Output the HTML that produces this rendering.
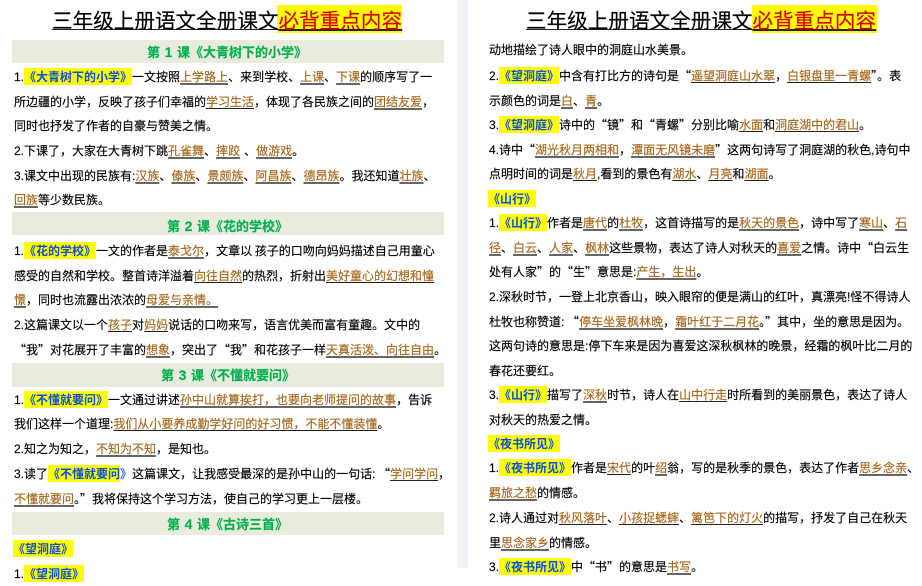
<!DOCTYPE html>
<html lang="zh-CN">
<head>
<meta charset="utf-8">
<style>
html,body{margin:0;padding:0;background:#fff;}
body{width:922px;height:568px;overflow:hidden;position:relative;font-family:"Noto Sans CJK SC","WenQuanYi Zen Hei",sans-serif;font-size:12px;color:#000;-webkit-text-stroke:0.15px currentColor;}
.strip{position:absolute;left:457px;top:0;width:11px;height:568px;background:linear-gradient(90deg,#f5f6f9,#eff0f6);}
.l{position:absolute;height:24px;line-height:24px;white-space:nowrap;}
.a{left:14px;}
.b{left:489px;}
.n{font-family:"Liberation Sans",sans-serif;}
.band{position:absolute;left:12px;width:432px;background:#e9ecdc;}
.h{position:absolute;height:24px;line-height:24px;white-space:nowrap;color:#00b050;font-weight:bold;font-size:13px;}
.h i{font-style:normal;display:inline-block;width:17px;text-align:center;font-family:"Liberation Sans",sans-serif;font-size:14px;}
.y{display:inline-block;background:#ff0;height:17px;line-height:17px;color:#0b50d8;font-weight:bold;-webkit-text-stroke:0;}
.bl{color:#0b50d8;}
.u,.g{color:#a5661a;text-decoration-line:underline;text-decoration-skip-ink:none;text-underline-offset:2px;}
.u{text-decoration-color:#222;text-decoration-thickness:1px;}
.g{text-decoration-color:#666;text-decoration-thickness:2px;}
.yt{position:absolute;top:5px;height:28px;background:#ff0;}
.t{position:absolute;top:5px;height:28px;line-height:28px;font-size:20.6px;white-space:nowrap;color:#000;text-decoration-line:underline;text-decoration-skip-ink:none;text-decoration-color:#222;text-decoration-thickness:1px;text-underline-offset:1px;}
.t b{font-weight:normal;color:#d40000;text-decoration-line:underline;text-decoration-skip-ink:none;text-decoration-color:#222;text-underline-offset:1px;}
</style>
</head>
<body>
<div class="strip"></div>

<div class="yt" style="left:277px;width:125px"></div>
<div class="yt" style="left:752px;width:125px"></div>
<div class="t" style="left:52px">三年级上册语文全册课文<b>必背重点内容</b></div>
<div class="t" style="left:526px">三年级上册语文全册课文<b>必背重点内容</b></div>

<div class="band" style="top:40px;height:23px"></div>
<div class="h" style="left:147px;top:40px">第<i>1</i>课《大青树下的小学》</div>
<div class="l a" style="top:65px"><span class="n">1.</span><span class="y">《大青树下的小学》</span>一文按照<span class="g">上学路上</span>、来到学校、<span class="g">上课</span>、<span class="g">下课</span>的顺序写了一</div>
<div class="l a" style="top:90px">所边疆的小学，反映了孩子们幸福的<span class="u">学习生活</span>，体现了各民族之间的<span class="g">团结友爱</span>，</div>
<div class="l a" style="top:114px">同时也抒发了作者的自豪与赞美之情。</div>
<div class="l a" style="top:139px"><span class="n">2.</span>下课了，大家在大青树下跳<span class="g">孔雀舞</span>、<span class="g">摔跤</span><span style="margin-left:4px">、</span><span class="g">做游戏</span>。</div>
<div class="l a" style="top:164px"><span class="n">3.</span>课文中出现的民族有<span class="n">:</span><span class="g">汉族</span>、<span class="g">傣族</span>、<span class="g">景颇族</span>、<span class="g">阿昌族</span>、<span class="g">德昂族</span>。我还知道<span class="g">壮族</span>、</div>
<div class="l a" style="top:188px"><span class="g">回族</span>等少数民族。</div>

<div class="band" style="top:212px;height:23px"></div>
<div class="h" style="left:167px;top:214px">第<i>2</i>课《花的学校》</div>
<div class="l a" style="top:239px"><span class="n">1.</span><span class="y">《花的学校》</span>一文的作者是<span class="g">泰戈尔</span>，文章以&nbsp;孩子的口吻向妈妈描述自己用童心</div>
<div class="l a" style="top:264px">感受的自然和学校。整首诗洋溢着<span class="u">向往自然</span>的热烈，折射出<span class="u">美好童心的幻想和憧</span></div>
<div class="l a" style="top:288px"><span class="g">憬</span>，同时也流露出浓浓的<span class="g">母爱与亲情。</span></div>
<div class="l a" style="top:313px"><span class="n">2.</span>这篇课文以一个<span class="u">孩子</span>对<span class="u">妈妈</span>说话的口吻来写，语言优美而富有童趣。文中的</div>
<div class="l a" style="top:338px">“我”对花展开了丰富的<span class="g">想象</span>，突出了“我”和花孩子一样<span class="g">天真活泼、向往自由</span>。</div>

<div class="band" style="top:363px;height:24px"></div>
<div class="h" style="left:161px;top:363px">第<i>3</i>课《不懂就要问》</div>
<div class="l a" style="top:388px"><span class="n">1.</span><span class="y">《不懂就要问》</span>一文通过讲述<span class="g">孙中山就算挨打，也要向老师提问的故事</span>，告诉</div>
<div class="l a" style="top:412px">我们这样一个道理<span class="n">:</span><span class="u">我们从小要养成勤学好问的好习惯，不能不懂装懂</span>。</div>
<div class="l a" style="top:437px"><span class="n">2.</span>知之为知之，<span class="g">不知为不知</span>，是知也。</div>
<div class="l a" style="top:462px"><span class="n">3.</span>读了<span class="y">《不懂就要问</span><span class="bl">》</span>这篇课文，让我感受最深的是孙中山的一句话<span class="n">:</span> “<span class="u">学问学问</span>，</div>
<div class="l a" style="top:487px"><span class="g">不懂就要问</span>。”我将保持这个学习方法，使自己的学习更上一层楼。</div>

<div class="band" style="top:512px;height:23px"></div>
<div class="h" style="left:167px;top:512px">第<i>4</i>课《古诗三首》</div>
<div class="l" style="left:13px;top:537px"><span class="y">《望洞庭》</span></div>
<div class="l a" style="top:562px"><span class="n">1.</span><span class="y">《望洞庭》</span></div>

<div class="l b" style="top:38px">动地描绘了诗人眼中的洞庭山水美景。</div>
<div class="l b" style="top:64px"><span class="n">2.</span><span class="y">《望洞庭》</span>中含有打比方的诗句是“<span class="u">遥望洞庭山水翠</span>，<span class="u">白银盘里一青螺</span>”。表</div>
<div class="l b" style="top:89px">示颜色的词是<span class="g">白</span>、<span class="g">青</span>。</div>
<div class="l b" style="top:113px"><span class="n">3.</span><span class="y">《望洞庭》</span>诗中的“镜”和“青螺”分别比喻<span class="u">水面</span>和<span class="u">洞庭湖中的君山</span>。</div>
<div class="l b" style="top:138px"><span class="n">4.</span>诗中“<span class="g">湖光秋月两相和</span>，<span class="g">潭面无风镜未磨</span>”这两句诗写了洞庭湖的秋色<span class="n">,</span>诗句中</div>
<div class="l b" style="top:162px">点明时间的词是<span class="u">秋月</span><span class="n">,</span>看到的景色有<span class="u">湖水</span>、<span class="u">月亮</span>和<span class="u">湖面</span>。</div>
<div class="l" style="left:488px;top:187px"><span class="y">《山行》</span></div>
<div class="l b" style="top:211px"><span class="n">1.</span><span class="y">《山行》</span>作者是<span class="g">唐代</span>的<span class="g">杜牧</span>，这首诗描写的是<span class="g">秋天的景色</span>，诗中写了<span class="g">寒山</span>、<span class="g">石</span></div>
<div class="l b" style="top:236px"><span class="g">径</span>、<span class="g">白云</span>、<span class="g">人家</span>、<span class="g">枫林</span>这些景物，表达了诗人对秋天的<span class="g">喜爱</span>之情。诗中“白云生</div>
<div class="l b" style="top:260px">处有人家”的“生”意思是<span class="n">:</span><span class="g">产生，生出</span>。</div>
<div class="l b" style="top:285px"><span class="n">2.</span>深秋时节，一登上北京香山，映入眼帘的便是满山的红叶，真漂亮<span class="n">!</span>怪不得诗人</div>
<div class="l b" style="top:310px">杜牧也称赞道<span class="n">:</span> “<span class="g">停车坐爱枫林晚</span>，<span class="g">霜叶红于二月花</span>。”其中，坐的意思是因为。</div>
<div class="l b" style="top:334px">这两句诗的意思是<span class="n">:</span>停下车来是因为喜爱这深秋枫林的晚景，经霜的枫叶比二月的</div>
<div class="l b" style="top:359px">春花还要红。</div>
<div class="l b" style="top:383px"><span class="n">3.</span><span class="y">《山行》</span>描写了<span class="g">深秋</span>时节，诗人在<span class="u">山中行走</span>时所看到的美丽景色，表达了诗人</div>
<div class="l b" style="top:408px">对秋天的热爱之情。</div>
<div class="l" style="left:488px;top:432px"><span class="y">《夜书所见》</span></div>
<div class="l b" style="top:456px"><span class="n">1.</span><span class="y">《夜书所见》</span>作者是<span class="u">宋代</span>的叶<span class="g">绍</span>翁，写的是秋季的景色，表达了作者<span class="g">思乡念亲</span>、</div>
<div class="l b" style="top:481px"><span class="g">羁旅之愁</span>的情感。</div>
<div class="l b" style="top:506px"><span class="n">2.</span>诗人通过对<span class="u">秋风落叶</span>、<span class="u">小孩捉蟋蟀</span>、<span class="u">篱笆下的灯火</span>的描写，抒发了自己在秋天</div>
<div class="l b" style="top:531px">里<span class="g">思念家乡</span>的情感。</div>
<div class="l b" style="top:555px"><span class="n">3.</span><span class="y">《夜书所见》</span>中“书”的意思是<span class="g">书写</span>。</div>
</body>
</html>
